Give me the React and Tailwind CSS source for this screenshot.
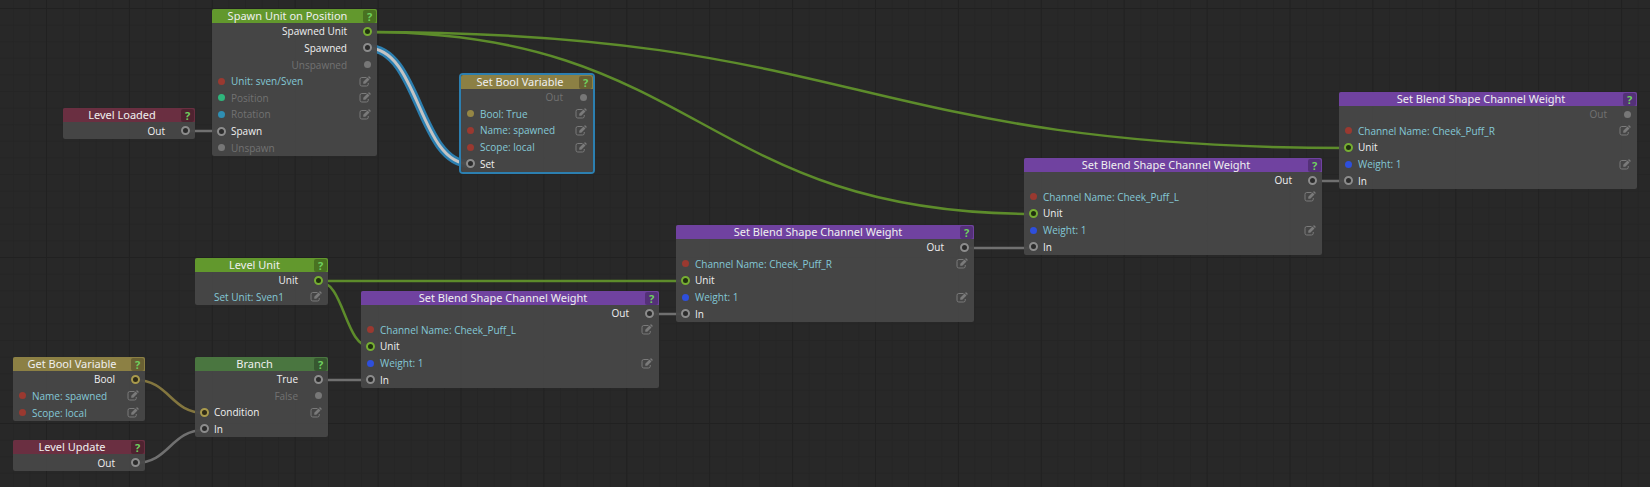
const HEADER = {
  green: "bg-[#62982d]",
  olive: "bg-[#8c8044]",
  maroon: "bg-[#6a2f41]",
  forest: "bg-[#4a7640]",
  purple: "bg-[#7042a0]",
};

const DOT = {
  red: "bg-[#9a3930]",
  teal: "bg-[#2fb57c]",
  cyan: "bg-[#2f8fb3]",
  blue: "bg-[#2e4fdc]",
  olive: "bg-[#958644]",
  gray: "bg-[#777777]",
};

const RING = {
  green: "border-[#76ae32] bg-[#20300f]",
  gray: "border-[#8c8c8c] bg-[#2b2b2b]",
  olive: "border-[#a99a4c] bg-[#2f2b17]",
};

const TEXT = {
  on: "text-[#f0f0f0]",
  off: "text-[#727272]",
  value: "text-[#84c8d6]",
};

const BODY = {
  1: "h-[17px]",
  2: "h-[33px]",
  3: "h-[50px]",
  4: "h-[66px]",
  5: "h-[83px]",
  8: "h-[133px]",
};

const output = (label, ring) => ({ side: "out", label, ring, dot: ring ? null : "gray", tone: ring ? "on" : "off" });
const input = (label, ring) => ({ side: "in", label, ring, dot: ring ? null : "gray", tone: ring ? "on" : "off" });
const field = (label, dot, tone = "value") => ({ side: "in", label, dot, tone, edit: true });

const blendRows = (channel, outRing) => [
  output("Out", outRing),
  field(`Channel Name: ${channel}`, "red"),
  input("Unit", "green"),
  field("Weight: 1", "blue"),
  input("In", "gray"),
];

const NODES = [
  { title: "Level Loaded", color: "maroon", place: "left-[63px] top-[108px] w-[132px]", rows: [output("Out", "gray")] },
  {
    title: "Spawn Unit on Position",
    color: "green",
    place: "left-[212px] top-[9px] w-[165px]",
    rows: [
      output("Spawned Unit", "green"),
      output("Spawned", "gray"),
      output("Unspawned"),
      field("Unit: sven/Sven", "red"),
      field("Position", "teal", "off"),
      field("Rotation", "cyan", "off"),
      input("Spawn", "gray"),
      input("Unspawn"),
    ],
  },
  {
    title: "Set Bool Variable",
    color: "olive",
    selected: true,
    place: "left-[461px] top-[75px] w-[132px]",
    rows: [
      output("Out"),
      field("Bool: True", "olive"),
      field("Name: spawned", "red"),
      field("Scope: local", "red"),
      input("Set", "gray"),
    ],
  },
  {
    title: "Level Unit",
    color: "green",
    place: "left-[195px] top-[258px] w-[133px]",
    rows: [output("Unit", "green"), field("Set Unit: Sven1", null)],
  },
  {
    title: "Get Bool Variable",
    color: "olive",
    place: "left-[13px] top-[357px] w-[132px]",
    rows: [output("Bool", "olive"), field("Name: spawned", "red"), field("Scope: local", "red")],
  },
  { title: "Level Update", color: "maroon", place: "left-[13px] top-[440px] w-[132px]", rows: [output("Out", "gray")] },
  {
    title: "Branch",
    color: "forest",
    place: "left-[195px] top-[357px] w-[133px]",
    rows: [
      output("True", "gray"),
      output("False"),
      { side: "in", label: "Condition", ring: "olive", tone: "on", edit: true },
      input("In", "gray"),
    ],
  },
  { title: "Set Blend Shape Channel Weight", color: "purple", place: "left-[361px] top-[291px] w-[298px]", rows: blendRows("Cheek_Puff_L", "gray") },
  { title: "Set Blend Shape Channel Weight", color: "purple", place: "left-[676px] top-[225px] w-[298px]", rows: blendRows("Cheek_Puff_R", "gray") },
  { title: "Set Blend Shape Channel Weight", color: "purple", place: "left-[1024px] top-[158px] w-[298px]", rows: blendRows("Cheek_Puff_L", "gray") },
  { title: "Set Blend Shape Channel Weight", color: "purple", place: "left-[1339px] top-[92px] w-[298px]", rows: blendRows("Cheek_Puff_R") },
];

const WIRES = [
  { from: [368, 32], to: [1349, 148], stroke: "#5d8c2b" },
  { from: [368, 32], to: [1034, 214], stroke: "#5d8c2b" },
  { from: [318, 281], to: [686, 281], stroke: "#5d8c2b" },
  { from: [318, 281], to: [371, 347], stroke: "#5d8c2b" },
  { from: [135, 380], to: [205, 413], stroke: "#83763f" },
  { from: [135, 463], to: [205, 430], stroke: "#707070" },
  { from: [185, 131], to: [222, 131], stroke: "#707070" },
  { from: [318, 380], to: [371, 380], stroke: "#707070" },
  { from: [649, 314], to: [686, 314], stroke: "#707070" },
  { from: [964, 248], to: [1034, 248], stroke: "#707070" },
  { from: [1312, 181], to: [1349, 181], stroke: "#707070" },
];

const SELECTED_WIRE = { from: [368, 48], to: [470, 164] };

function curve({ from: [x1, y1], to: [x2, y2] }) {
  const mid = (x1 + x2) / 2;
  return `M${x1} ${y1}C${mid} ${y1} ${mid} ${y2} ${x2} ${y2}`;
}

function EditIcon() {
  return (
    <svg viewBox="0 0 24 22" className="h-[11px] w-3" aria-hidden="true">
      <path d="M15 3H5.500A3.500 3.500 0 0 0 2 6.500V16.500A3.500 3.500 0 0 0 5.500 20H15A3.500 3.500 0 0 0 18.500 16.500V14" fill="none" stroke="currentColor" strokeWidth="2" />
      <path d="M8.500 15.500V11.500L17 3L21 7L12.500 15.500ZM18 2L19 1Q20 0 21 1L23 3Q24 4 23 5L22 6Z" fill="currentColor" />
    </svg>
  );
}

function Port({ ring, dot }) {
  if (ring) return <span className={`size-[9px] shrink-0 rounded-full border-2 ${RING[ring]}`} />;
  if (dot) return <span className={`size-[7px] shrink-0 rounded-full ${DOT[dot]}`} />;
  return null;
}

function Row({ row }) {
  const port = (
    <span className="flex w-[9px] shrink-0 items-center justify-center">
      <Port ring={row.ring} dot={row.dot} />
    </span>
  );
  if (row.side === "out") {
    return (
      <li className="flex min-h-0 items-center justify-end gap-4 pr-[5px]">
        <span className={TEXT[row.tone]}>{row.label}</span>
        {port}
      </li>
    );
  }
  return (
    <li className="flex min-h-0 items-center gap-[5px] px-[5px]">
      {port}
      <span className={TEXT[row.tone]}>{row.label}</span>
      {row.edit && (
        <button type="button" aria-label={`Edit ${row.label}`} className="mr-px ml-auto text-[#7a7a7a]">
          <EditIcon />
        </button>
      )}
    </li>
  );
}

function Node({ node }) {
  return (
    <section
      className={`absolute rounded-[2px] bg-[#474747]/95 ${node.place} ${
        node.selected ? "ring-2 ring-[#2c7fb0]" : ""
      }`}
    >
      <header className={`flex h-[14px] items-center rounded-t-[2px] ${HEADER[node.color]}`}>
        <h2 className="flex-1 text-center font-['Noto_Sans',sans-serif] text-[11px] leading-[14px] whitespace-nowrap text-[#efefef]">
          {node.title}
        </h2>
        <button
          type="button"
          aria-label={`Help: ${node.title}`}
          className="mr-px size-[13px] rounded-[2px] bg-black/25 text-center text-[11px] leading-[13px] font-bold text-[#6fd05f]"
        >
          ?
        </button>
      </header>
      <ul className={`grid auto-rows-fr text-[10px] leading-4 font-medium whitespace-nowrap ${BODY[node.rows.length]}`}>
        {node.rows.map((row) => (
          <Row key={row.label} row={row} />
        ))}
      </ul>
    </section>
  );
}

function Grid() {
  return (
    <svg className="absolute inset-0 h-full w-full" aria-hidden="true">
      <defs>
        <pattern id="minor" width="16.58" height="16.6" x="46" y="8" patternUnits="userSpaceOnUse">
          <path d="M0 .5H17M.5 0V17" stroke="#252525" fill="none" />
        </pattern>
        <pattern id="major" width="82.9" height="83" x="46" y="8" patternUnits="userSpaceOnUse">
          <path d="M0 .5H83M.5 0V83" stroke="#212121" fill="none" />
        </pattern>
      </defs>
      <rect width="100%" height="100%" fill="url(#minor)" />
      <rect width="100%" height="100%" fill="url(#major)" />
    </svg>
  );
}

export default function App() {
  return (
    <main className="relative min-h-screen overflow-hidden bg-[#282828] font-['Open_Sans','Noto_Sans',sans-serif]">
      <Grid />
      <svg className="absolute inset-0 h-full w-full" fill="none" aria-hidden="true">
        {WIRES.map((wire) => (
          <path key={curve(wire)} d={curve(wire)} stroke={wire.stroke} strokeWidth="2.5" />
        ))}
        <path d={curve(SELECTED_WIRE)} stroke="#2c7fb0" strokeWidth="8" />
        <path d={curve(SELECTED_WIRE)} stroke="#c4c4c4" strokeWidth="3" />
      </svg>
      {NODES.map((node) => (
        <Node key={node.place} node={node} />
      ))}
    </main>
  );
}
